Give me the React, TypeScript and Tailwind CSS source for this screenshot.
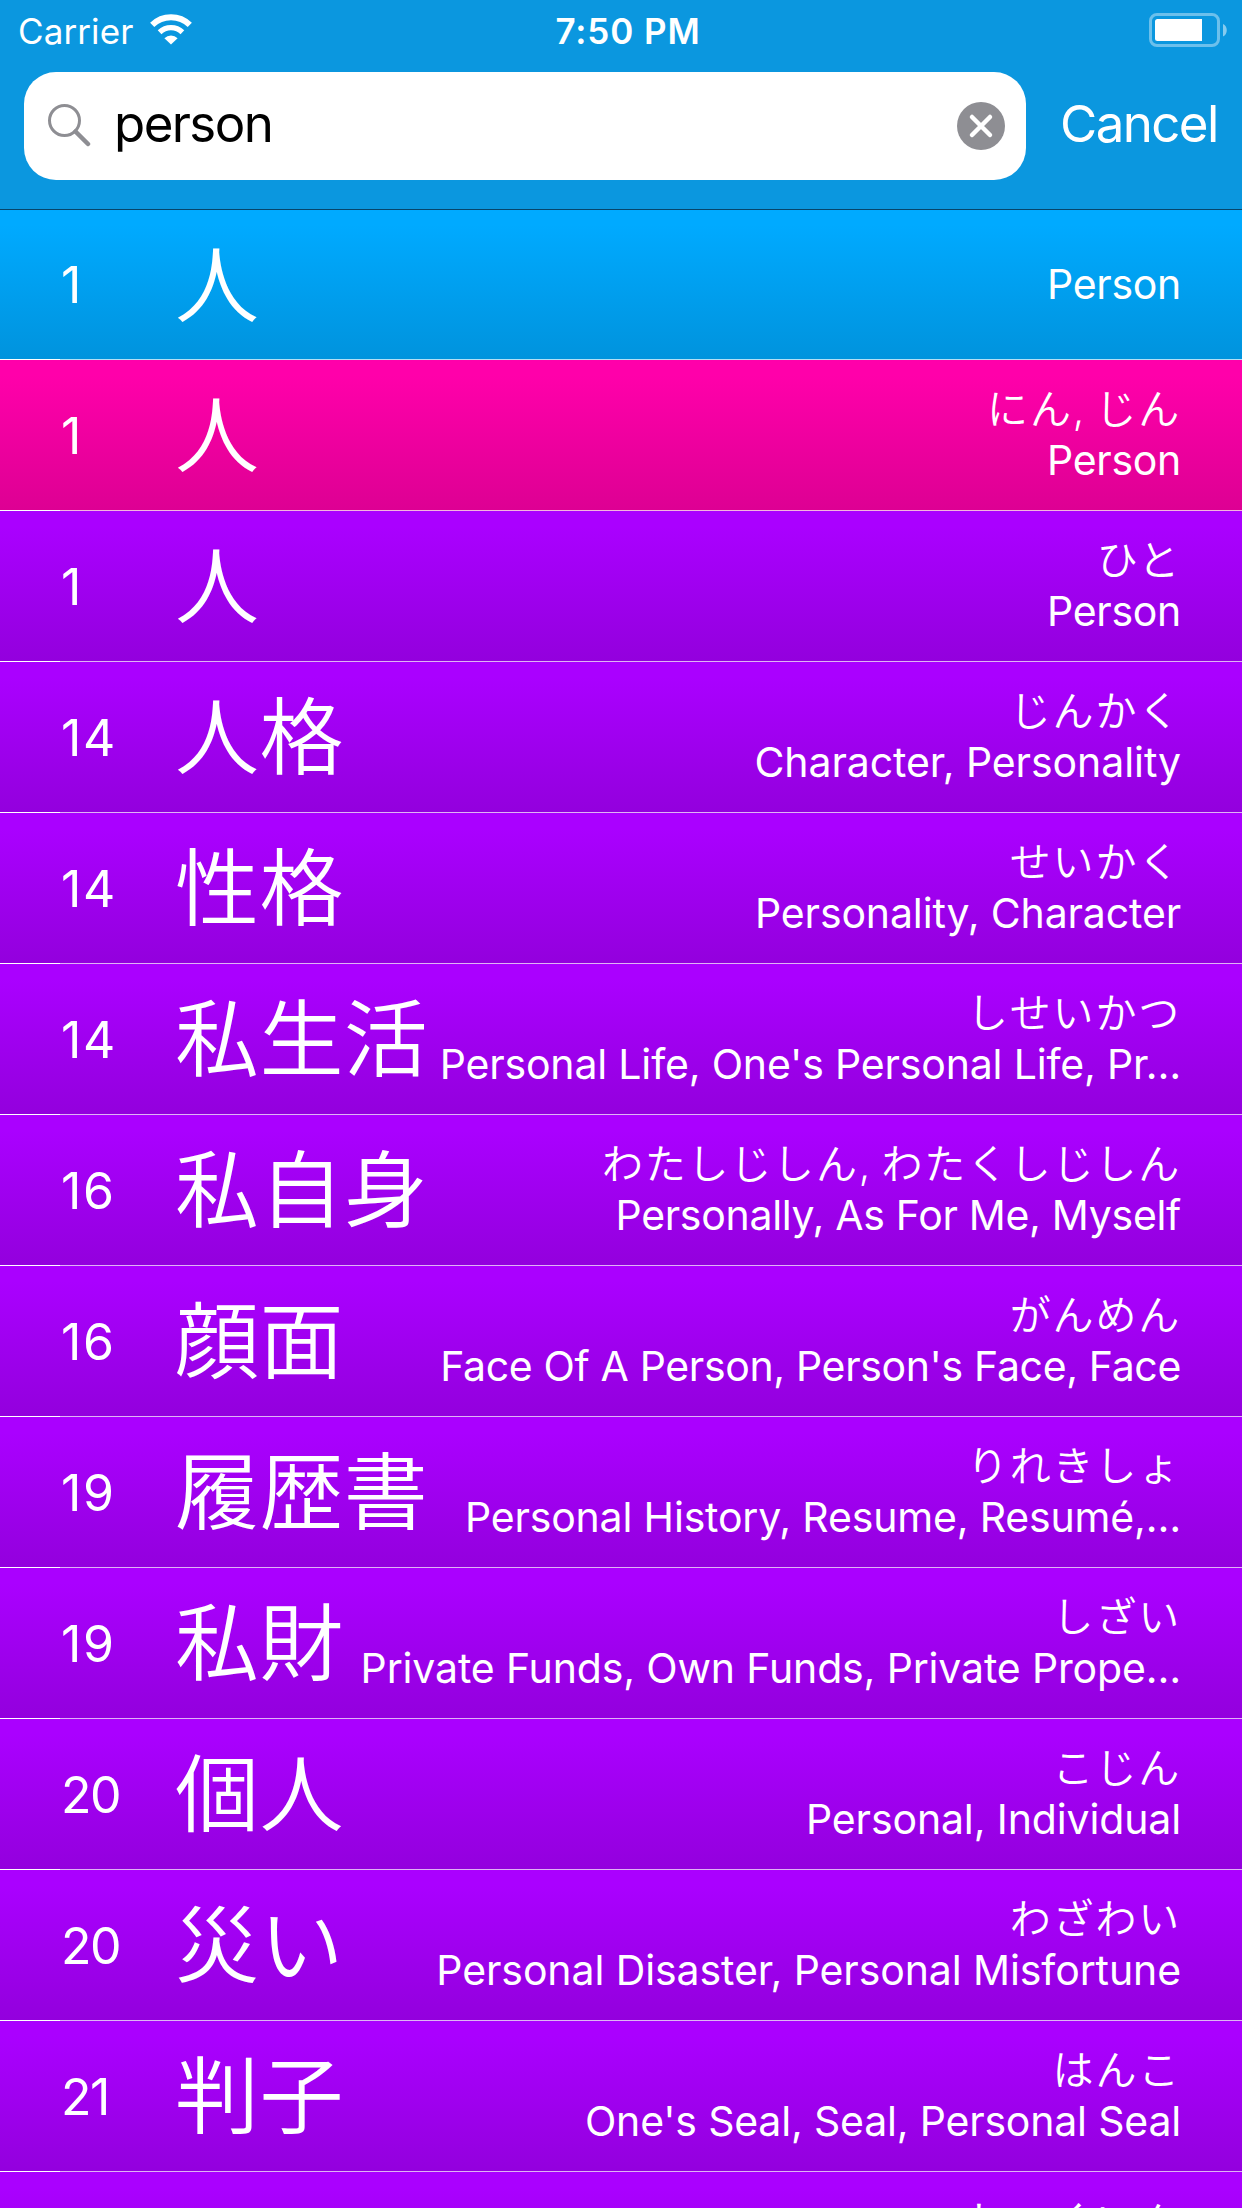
type Kind = 'radical' | 'kanji' | 'vocab';

interface Item {
  kind: Kind;
  level: number;
  chars?: string;
  reading?: string;
  meaning: string;
  tracking: string;
}

const items: Item[] = [
  { kind: 'radical', level: 1, chars: '人', meaning: 'Person', tracking: 'tracking-[-0.3px]' },
  { kind: 'kanji', level: 1, chars: '人', reading: 'にん, じん', meaning: 'Person', tracking: 'tracking-[-0.3px]' },
  { kind: 'vocab', level: 1, chars: '人', reading: 'ひと', meaning: 'Person', tracking: 'tracking-[-0.3px]' },
  { kind: 'vocab', level: 14, chars: '人格', reading: 'じんかく', meaning: 'Character, Personality', tracking: 'tracking-[-0.07px]' },
  { kind: 'vocab', level: 14, chars: '性格', reading: 'せいかく', meaning: 'Personality, Character', tracking: 'tracking-[-0.13px]' },
  { kind: 'vocab', level: 14, chars: '私生活', reading: 'しせいかつ', meaning: "Personal Life, One's Personal Life, Pr…", tracking: 'tracking-[-0.17px]' },
  { kind: 'vocab', level: 16, chars: '私自身', reading: 'わたしじしん, わたくしじしん', meaning: 'Personally, As For Me, Myself', tracking: 'tracking-[-0.3px]' },
  { kind: 'vocab', level: 16, chars: '顔面', reading: 'がんめん', meaning: "Face Of A Person, Person's Face, Face", tracking: 'tracking-[-0.35px]' },
  { kind: 'vocab', level: 19, chars: '履歴書', reading: 'りれきしょ', meaning: 'Personal History, Resume, Resumé,…', tracking: 'tracking-[-0.17px]' },
  { kind: 'vocab', level: 19, chars: '私財', reading: 'しざい', meaning: 'Private Funds, Own Funds, Private Prope…', tracking: 'tracking-[-0.15px]' },
  { kind: 'vocab', level: 20, chars: '個人', reading: 'こじん', meaning: 'Personal, Individual', tracking: 'tracking-[-0.13px]' },
  { kind: 'vocab', level: 20, chars: '災い', reading: 'わざわい', meaning: 'Personal Disaster, Personal Misfortune', tracking: 'tracking-[-0.1px]' },
  { kind: 'vocab', level: 21, chars: '判子', reading: 'はんこ', meaning: "One's Seal, Seal, Personal Seal", tracking: 'tracking-[-0.19px]' },
  { kind: 'vocab', level: 21, reading: 'しょくいん', meaning: 'Personnel', tracking: 'tracking-[-0.2px]' },
];

const background: Record<Kind, string> = {
  radical: 'h-[150px] bg-linear-to-b from-[#00aaff] from-10% to-[#0093dd]',
  kanji: 'h-[151px] bg-linear-to-b from-[#ff00aa] from-10% to-[#dd0093]',
  vocab: 'h-[151px] bg-linear-to-b from-[#aa00ff] from-10% to-[#9300dd]',
};

function Row({ item }: { item: Item }) {
  const isTeen = item.level > 9 && item.level < 20;
  return (
    <li className={`relative flex shrink-0 items-center pr-[61px] pl-[61px] ${background[item.kind]}`}>
      <span className={`w-[114px] shrink-0 text-[50px] leading-none ${isTeen ? 'tracking-[1.6px]' : 'tracking-[-1.5px]'}`}>
        {item.level}
      </span>
      <span className="shrink-0 pb-[11px] font-['Noto_Sans_CJK_JP',sans-serif] text-[84px] leading-none font-[350] tracking-[0.4px]">
        {item.chars}
      </span>
      <div className="flex grow flex-col items-end pb-[2px] whitespace-nowrap">
        {item.reading && (
          <span className="h-[52px] font-['Inter','Noto_Sans_CJK_JP',sans-serif] text-[41px] leading-[52px] font-[350] tracking-[1.8px] [word-spacing:-4px]">
            {item.reading}
          </span>
        )}
        <span className={`h-[51px] text-[41px] leading-[51px] ${item.tracking}`}>{item.meaning}</span>
      </div>
      <div className="absolute inset-x-0 bottom-0 flex h-px">
        <div className="w-[60px] bg-white" />
        <div className="grow bg-white/70" />
      </div>
    </li>
  );
}

function WifiIcon() {
  return (
    <svg className="h-[31px] w-[42px]" viewBox="0 0 42 31" fill="none">
      <path d="M2.2 10.8a27 27 0 0 1 37.6 0" stroke="white" strokeWidth="6" />
      <path d="M9.6 18.2a16.5 16.5 0 0 1 22.8 0" stroke="white" strokeWidth="5.4" />
      <path d="M14.4 24.2a9.6 9.6 0 0 1 13.2 0L21 30.6z" fill="white" />
    </svg>
  );
}

function BatteryIcon() {
  return (
    <svg className="h-[34px] w-[79px]" viewBox="0 0 79 34" fill="none">
      <rect x="1.5" y="1.5" width="68" height="31" rx="6.5" stroke="white" strokeOpacity="0.4" strokeWidth="3" />
      <path d="M8.500 6H53v22H8.500a2.500 2.500 0 0 1-2.500-2.500V8.500A2.500 2.500 0 0 1 8.500 6z" fill="white" />
      <path d="M74 11c5 2 5 10.500 0 12.500z" fill="white" fillOpacity="0.5" />
    </svg>
  );
}

export default function App() {
  return (
    <div className="flex h-[2208px] w-[1242px] flex-col overflow-hidden bg-[#9300dd] font-['Inter','Noto_Sans_CJK_JP',sans-serif] text-white">
      <header className="flex h-[210px] shrink-0 flex-col border-b border-[#06456b] bg-[#0b97df]">
        <div className="grid h-[72px] shrink-0 grid-cols-3 pr-[14px] pl-[18px]">
          <div className="flex items-start">
            <span className="mt-[10px] w-[117px] text-[35px] leading-[42px] tracking-[0.1px]">Carrier</span>
            <span className="mt-[14px] ml-[15px]"><WifiIcon /></span>
          </div>
          <span className="mt-[10px] pl-[10px] text-center text-[35px] leading-[42px] font-semibold tracking-[0.9px]">7:50 PM</span>
          <div className="mt-[13px] flex justify-end"><BatteryIcon /></div>
        </div>
        <div className="flex items-center pl-[24px]">
          <div className="flex h-[108px] w-[1002px] items-center rounded-[32px] bg-white pr-[21px] pl-[24px]">
            <svg className="mb-[2px] h-[43px] w-[43px]" viewBox="0 0 43 43" fill="none" stroke="#8e8e93">
              <circle cx="16.500" cy="16.500" r="15" strokeWidth="3" />
              <path d="M27.500 27.500L40 40" strokeWidth="4.500" strokeLinecap="round" />
            </svg>
            <span className="ml-[23px] grow pb-[4px] text-[51px] leading-[60px] tracking-[-1.6px] text-black">person</span>
            <svg className="h-[48px] w-[48px]" viewBox="0 0 48 48">
              <circle cx="24" cy="24" r="24" fill="#8e8e93" />
              <path d="M15 15l18 18M33 15L15 33" stroke="white" strokeWidth="4.500" strokeLinecap="round" />
            </svg>
          </div>
          <span className="ml-[34px] pb-[4px] text-[51px] leading-[60px] tracking-[-1.6px]">Cancel</span>
        </div>
      </header>
      <ul className="flex flex-col">
        {items.map((item, i) => (
          <Row key={i} item={item} />
        ))}
      </ul>
    </div>
  );
}
